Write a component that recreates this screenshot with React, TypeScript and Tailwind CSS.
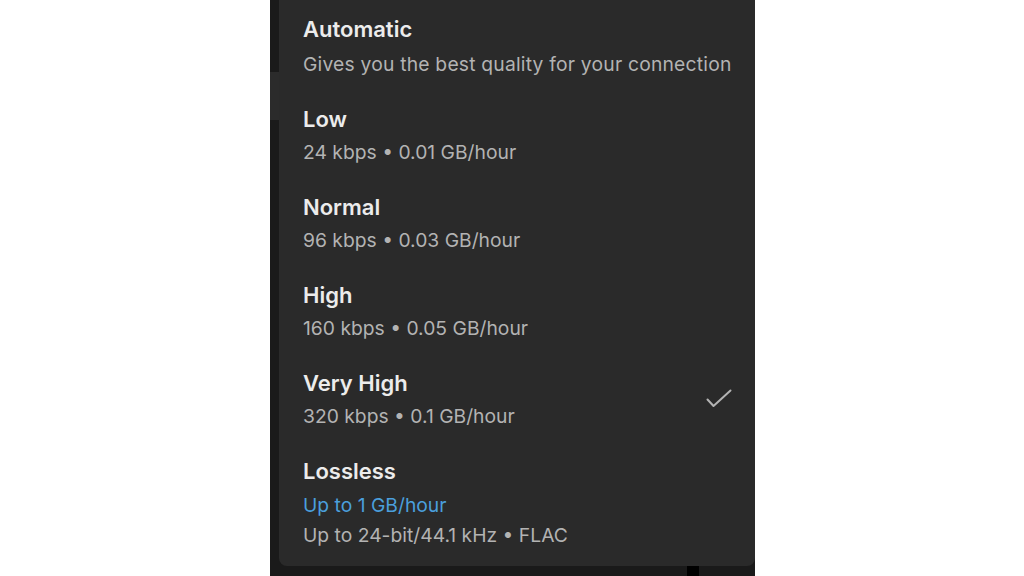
import React from 'react';

interface QualityOption {
  label: string;
  detail: string;
  selected?: boolean;
}

const options: QualityOption[] = [
  { label: 'Low', detail: '24 kbps • 0.01 GB/hour' },
  { label: 'Normal', detail: '96 kbps • 0.03 GB/hour' },
  { label: 'High', detail: '160 kbps • 0.05 GB/hour' },
  { label: 'Very High', detail: '320 kbps • 0.1 GB/hour', selected: true },
];

function CheckIcon() {
  return (
    <svg width="26" height="20" viewBox="0 0 26 20" fill="none" className="shrink-0">
      <path
        d="M1.5 10.5 L7.5 17 L24.5 1.5"
        stroke="#b3b3b3"
        strokeWidth="2"
        strokeLinecap="round"
        strokeLinejoin="round"
      />
    </svg>
  );
}

function OptionRow({ label, detail, selected }: QualityOption) {
  return (
    <div className="flex h-[88px] items-start justify-between pr-[23px]">
      <div>
        <p className="text-[22px] leading-[28px] font-semibold text-[#ececec]">{label}</p>
        <p className="mt-[7px] text-[19.3px] leading-[24px] text-[#b3b3b3]">{detail}</p>
      </div>
      {selected && (
        <div className="flex h-[60px] items-center">
          <CheckIcon />
        </div>
      )}
    </div>
  );
}

export default function App() {
  return (
    <div
      className="flex h-[576px] w-[1024px] overflow-hidden bg-white"
      style={{ fontFamily: 'Inter, "Noto Sans", sans-serif' }}
    >
      <div className="w-[270px]" />
      <div className="flex w-[485px] flex-col bg-[#1a1a1a]">
        <div className="flex h-[566px]">
          <div className="flex w-[9px] flex-col">
            <div className="h-[72px]" />
            <div className="h-[48px] bg-[#2b2b2b]" />
          </div>
          <section className="flex-1 rounded-b-[8px] bg-[#2a2a2a] pt-[15px] pl-[24px]">
            <div className="h-[90px]">
              <p className="text-[22px] leading-[28px] font-semibold text-[#ececec]">Automatic</p>
              <p className="mt-[9px] text-[19.3px] leading-[24px] tracking-[0.2px] text-[#b3b3b3]">
                Gives you the best quality for your connection
              </p>
            </div>
            {options.map((o) => (
              <OptionRow key={o.label} {...o} />
            ))}
            <div>
              <p className="text-[22px] leading-[28px] font-semibold text-[#ececec]">Lossless</p>
              <p className="mt-[8px] text-[19.3px] leading-[24px] text-[#4a9fdc]">Up to 1 GB/hour</p>
              <p className="mt-[6px] text-[19.3px] leading-[24px] text-[#b3b3b3]">
                Up to 24-bit/44.1 kHz • FLAC
              </p>
            </div>
          </section>
        </div>
        <div className="flex h-[10px]">
          <div className="w-[417px]" />
          <div className="w-[12px] bg-black" />
        </div>
      </div>
    </div>
  );
}
